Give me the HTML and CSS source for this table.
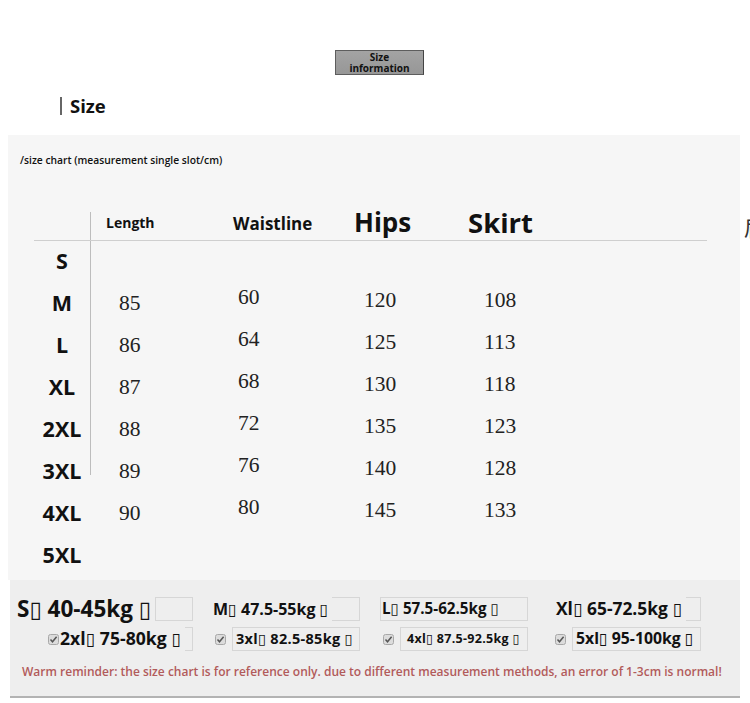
FILE: index.html
```html
<!DOCTYPE html>
<html>
<head>
<meta charset="utf-8">
<link rel="stylesheet" href="styles.css">
</head>
<body>
<div class="page">
  <div class="badge-wrap"><div class="badge"><span class="badge-line">Size</span><span class="badge-line">information</span></div></div>
  <div class="heading"><span class="bar"></span><span class="heading-text">Size</span></div>

  <div class="panel">
    <div class="note">/size chart (measurement single slot/cm)</div>
    <div class="chart">
      <div class="vline"></div>
      <div class="c1 hd"></div>
      <div class="c3 hd h-len">Length</div>
      <div class="c4 hd h-waist">Waistline</div>
      <div class="c5 hd h-hips">Hips</div>
      <div class="c6 hd h-skirt">Skirt</div>
      <div class="c7 hd h-more">肩</div>
      <div class="hline"></div>

      <div class="c1 lab">S</div><div class="c3 v len"></div><div class="c4 v waist"></div><div class="c5 v hips"></div><div class="c6 v skirt"></div>
      <div class="c1 lab">M</div><div class="c3 v len">85</div><div class="c4 v waist">60</div><div class="c5 v hips">120</div><div class="c6 v skirt">108</div>
      <div class="c1 lab">L</div><div class="c3 v len">86</div><div class="c4 v waist">64</div><div class="c5 v hips">125</div><div class="c6 v skirt">113</div>
      <div class="c1 lab">XL</div><div class="c3 v len">87</div><div class="c4 v waist">68</div><div class="c5 v hips">130</div><div class="c6 v skirt">118</div>
      <div class="c1 lab">2XL</div><div class="c3 v len">88</div><div class="c4 v waist">72</div><div class="c5 v hips">135</div><div class="c6 v skirt">123</div>
      <div class="c1 lab">3XL</div><div class="c3 v len">89</div><div class="c4 v waist">76</div><div class="c5 v hips">140</div><div class="c6 v skirt">128</div>
      <div class="c1 lab">4XL</div><div class="c3 v len">90</div><div class="c4 v waist">80</div><div class="c5 v hips">145</div><div class="c6 v skirt">133</div>
      <div class="c1 lab">5XL</div><div class="c3 v len"></div><div class="c4 v waist"></div><div class="c5 v hips"></div><div class="c6 v skirt"></div>
    </div>
  </div>

  <div class="weights">
    <div class="wgrid">
      <div class="cell"><div class="field cover f-s"><span class="txt t-s">S▯ 40-45kg ▯</span></div></div>
      <div class="cell"><div class="field cover f-m"><span class="txt t-m">M▯ 47.5-55kg ▯</span></div></div>
      <div class="cell"><div class="field f-l"><span class="txt t-l">L▯ 57.5-62.5kg ▯</span></div></div>
      <div class="cell"><div class="field cover f-xl"><span class="txt t-xl">Xl▯ 65-72.5kg ▯</span></div></div>

      <div class="cell">
        <svg class="chk" width="11" height="11" viewBox="0 0 11 11"><rect x="0.5" y="0.5" width="10" height="10" rx="2" fill="#dcdcdc" stroke="#a8a8a8"/><path d="M2.5 5.6 L4.5 7.8 L8.6 2.8" fill="none" stroke="#555" stroke-width="1.5"/></svg>
        <div class="field cover f-2xl"><span class="txt t-2xl">2xl▯ 75-80kg ▯</span></div>
      </div>
      <div class="cell">
        <svg class="chk" width="11" height="11" viewBox="0 0 11 11"><rect x="0.5" y="0.5" width="10" height="10" rx="2" fill="#dcdcdc" stroke="#a8a8a8"/><path d="M2.5 5.6 L4.5 7.8 L8.6 2.8" fill="none" stroke="#555" stroke-width="1.5"/></svg>
        <div class="field f-3xl"><span class="txt t-3xl">3xl▯ 82.5-85kg ▯</span></div>
      </div>
      <div class="cell">
        <svg class="chk" width="11" height="11" viewBox="0 0 11 11"><rect x="0.5" y="0.5" width="10" height="10" rx="2" fill="#dcdcdc" stroke="#a8a8a8"/><path d="M2.5 5.6 L4.5 7.8 L8.6 2.8" fill="none" stroke="#555" stroke-width="1.5"/></svg>
        <div class="field f-4xl"><span class="txt t-4xl">4xl▯ 87.5-92.5kg ▯</span></div>
      </div>
      <div class="cell">
        <svg class="chk" width="11" height="11" viewBox="0 0 11 11"><rect x="0.5" y="0.5" width="10" height="10" rx="2" fill="#dcdcdc" stroke="#a8a8a8"/><path d="M2.5 5.6 L4.5 7.8 L8.6 2.8" fill="none" stroke="#555" stroke-width="1.5"/></svg>
        <div class="field f-5xl"><span class="txt t-5xl">5xl▯ 95-100kg ▯</span></div>
      </div>
    </div>
    <div class="warm">Warm reminder: the size chart is for reference only. due to different measurement methods, an error of 1-3cm is normal!</div>
  </div>
</div>
</body>
</html>
```

FILE: styles.css
```css
html, body {
  margin: 0;
  padding: 0;
  background: #ffffff;
}
body {
  width: 750px;
  height: 703px;
  overflow: hidden;
  font-family: "Open Sans", "DejaVu Sans", sans-serif;
  color: #111;
}
.page {
  width: 750px;
}

/* top badge */
.badge-wrap {
  padding-top: 50px;
  padding-left: 335px;
}
.badge {
  width: 89px;
  height: 25px;
  box-sizing: border-box;
  background: linear-gradient(#a3a3a3, #979797);
  border: 1px solid #5d5d5d;
  border-right-color: #444;
  display: flex;
  flex-direction: column;
  align-items: center;
  justify-content: center;
  font-size: 10px;
  font-weight: 700;
  color: #111;
}
.badge-line {
  display: block;
  line-height: 11px;
  height: 11px;
}

/* heading */
.heading {
  display: flex;
  align-items: center;
  margin-top: 22px;
  margin-left: 60px;
  height: 18px;
}
.bar {
  width: 2px;
  height: 18px;
  background: #666;
}
.heading-text {
  margin-left: 8px;
  font-size: 18.5px;
  font-weight: 700;
  line-height: 18px;
  color: #111;
}

/* chart panel */
.panel {
  margin-top: 20px;
  margin-left: 8px;
  width: 732px;
  height: 445px;
  background: #f6f6f6;
  box-sizing: border-box;
  padding-top: 19px;
}
.note {
  padding-left: 12px;
  font-size: 10.3px;
  line-height: 12px;
  font-weight: 600;
  color: #111;
}
.chart {
  margin-top: 46px;
  margin-left: 26px;
  width: 673px;
  display: grid;
  grid-template-columns: 56px 1px 109px 130px 110px 120px 147px;
  grid-template-rows: 28px 1px repeat(8, 42px);
}
.vline {
  grid-column: 2;
  grid-row: 1 / 11;
  align-self: start;
  width: 1px;
  height: 263px;
  background: #bdbdbd;
}
.hline {
  grid-column: 1 / 8;
  grid-row: 2;
  background: #cfcfcf;
}
.c1 { grid-column: 1; }
.c3 { grid-column: 3; }
.c4 { grid-column: 4; }
.c5 { grid-column: 5; }
.c6 { grid-column: 6; }
.c7 { grid-column: 7; }

.hd {
  grid-row: 1;
  align-self: center;
  font-weight: 700;
  color: #111;
  white-space: nowrap;
  line-height: 1;
}
.h-len { font-size: 14px; padding-left: 15px; margin-top: -6px; }
.h-waist { font-size: 17px; padding-left: 33px; margin-top: -6px; }
.h-hips { font-size: 26px; padding-left: 24px; margin-top: -8px; }
.h-skirt { font-size: 27.5px; padding-left: 28px; margin-top: -6px; }
.h-more {
  font-family: "Noto Sans CJK SC", sans-serif;
  font-weight: 400;
  font-size: 22px;
  padding-left: 184px;
  color: #333;
}

.lab {
  align-self: center;
  text-align: center;
  font-size: 21.5px;
  font-weight: 700;
  line-height: 1;
  color: #111;
  margin-top: -2px;
}
.v {
  align-self: center;
  font-family: "Liberation Serif", serif;
  font-size: 21.5px;
  line-height: 1;
  color: #222;
}
.len { padding-left: 28px; margin-top: 0; }
.waist { padding-left: 38px; margin-bottom: 12px; }
.hips { padding-left: 34px; margin-bottom: 6px; }
.skirt { padding-left: 44px; margin-bottom: 6px; }

/* weights panel */
.weights {
  margin-left: 10px;
  width: 730px;
  height: 118px;
  box-sizing: border-box;
  background: #eeeeee;
  border-bottom: 2px solid #b3b3b3;
  padding-top: 17px;
}
.wgrid {
  display: grid;
  grid-template-columns: 183px 167px 168px 173px;
  grid-template-rows: 24px 24px;
  row-gap: 6px;
}
.cell {
  display: flex;
  justify-content: flex-end;
  align-items: center;
  gap: 6px;
}
.chk {
  flex: none;
  display: block;
}
.field {
  box-sizing: border-box;
  height: 24px;
  border: 1px solid #d6d6d6;
  display: flex;
  align-items: center;
}
.txt {
  font-weight: 700;
  color: #111;
  white-space: nowrap;
  line-height: 1;
}
.cover .txt {
  background: #eeeeee;
  align-self: stretch;
  display: flex;
  align-items: center;
  margin-top: -1px;
  margin-bottom: -1px;
  padding-right: 4px;
}
.f-s { width: 128px; }
.t-s { font-size: 22.5px; margin-left: -49px; border-right: 1px solid #d6d6d6; }
.f-m { width: 128px; }
.t-m { font-size: 16px; margin-left: -20px; }
.f-l { width: 148px; }
.t-l { font-size: 15.2px; padding-left: 1px; }
.f-xl { width: 129px; }
.t-xl { font-size: 17.4px; margin-left: -17px; }
.f-2xl { width: 128px; }
.t-2xl { font-size: 17.6px; margin-left: -6px; }
.f-3xl { width: 128px; }
.t-3xl { font-size: 14.5px; padding-left: 3px; letter-spacing: 0.3px; }
.f-4xl { width: 128px; }
.t-4xl { font-size: 12.5px; padding-left: 6px; letter-spacing: 0.3px; }
.f-5xl { width: 129px; }
.t-5xl { font-size: 15.8px; padding-left: 3px; }

.warm {
  margin-top: 14px;
  padding-left: 12px;
  font-size: 12px;
  line-height: 14px;
  font-weight: 600;
  color: #b25b5b;
  white-space: nowrap;
}
```
